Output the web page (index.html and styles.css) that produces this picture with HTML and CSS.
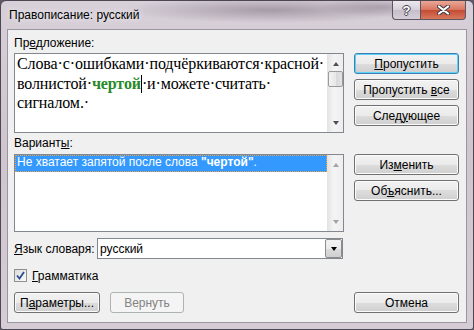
FILE: index.html
```html
<!DOCTYPE html>
<html lang="ru">
<head>
  <meta charset="UTF-8" />
  <title>Правописание: русский</title>
  <link rel="stylesheet" href="styles.css">
</head>
<body>

  <div class="window">

    <!-- Title bar -->
    <div class="titlebar">
      <span class="title">Правописание: русский</span>
      <div class="caption">
        <span class="cap-btn help">?</span>
        <span class="cap-btn close">
          <svg width="13" height="10" viewBox="0 0 13 10">
            <path d="M2 1.5 L11 8.5 M11 1.5 L2 8.5" stroke="#3b3b45" stroke-width="4" stroke-linecap="round"/>
            <path d="M2 1.5 L11 8.5 M11 1.5 L2 8.5" stroke="#fff" stroke-width="2.2" stroke-linecap="round"/>
          </svg>
        </span>
      </div>
    </div>

    <div class="panel">

      <!-- Sentence -->
      <div class="label">Пр<u>е</u>дложение:</div>
      <div class="row">
        <div class="box sentence">
          <div class="sentence-text">Слова·с·ошибками·подчёркиваются·красной·<br>волнистой·<b class="err">чертой</b><span class="caret"></span>·и·можете·считать·<br>сигналом.·</div>
          <div class="vscroll">
            <span class="arrow up"></span>
            <span class="thumb"></span>
            <span class="arrow down"></span>
          </div>
        </div>
        <div class="side">
          <button class="btn default"><u>П</u>ропустить</button>
          <button class="btn">Пропустить <u>в</u>се</button>
          <button class="btn">След<u>у</u>ющее</button>
        </div>
      </div>

      <!-- Suggestions -->
      <div class="label label-2">Вариант<u>ы</u>:</div>
      <div class="row">
        <div class="box list">
          <div class="list-items">
            <div class="item selected">Не хватает запятой после слова <b>"чертой"</b>.</div>
          </div>
          <div class="vscroll disabled">
            <span class="arrow up"></span>
            <span class="arrow down"></span>
          </div>
        </div>
        <div class="side">
          <button class="btn">Из<u>м</u>енить</button>
          <button class="btn">Об<u>ъ</u>яснить...</button>
        </div>
      </div>

      <!-- Dictionary language -->
      <div class="lang-row">
        <span class="lang-label"><u>Я</u>зык словаря:</span>
        <div class="combo">
          <span class="combo-value">русский</span>
          <span class="combo-btn"><span class="arrow down dark"></span></span>
        </div>
      </div>

      <label class="check-row">
        <span class="checkbox">
          <svg width="9" height="9" viewBox="0 0 9 9">
            <path d="M1 4.5 L3.5 7.5 L8 1" fill="none" stroke="#2b4d8f" stroke-width="1.8"/>
          </svg>
        </span>
        <span><u>Г</u>рамматика</span>
      </label>

      <div class="bottom-row">
        <button class="btn params">П<u>а</u>раметры...</button>
        <button class="btn undo" disabled>Вернуть</button>
        <button class="btn cancel">Отмена</button>
      </div>

    </div>
  </div>

</body>
</html>
```

FILE: styles.css
```css
body {
  margin: 0;
  background: #5f5866;
  font-family: "Liberation Sans", Arial, sans-serif;
  font-size: 12px;
  color: #000;
}
u {
  text-decoration: underline;
  text-underline-offset: 1px;
}

/* Window frame */
.window {
  width: 474px;
  height: 330px;
  box-sizing: border-box;
  border: 1px solid #4c4752;
  border-radius: 6px 6px 3px 3px;
  background:
    radial-gradient(ellipse 150px 13px at 270px 9px, rgba(70, 58, 76, 0.35), transparent),
    radial-gradient(ellipse 60px 10px at 380px 6px, rgba(70, 58, 76, 0.25), transparent),
    linear-gradient(180deg, #d8d0d9 0%, #cec5cf 45%, #d5ccd6 100%);
  display: flex;
  flex-direction: column;
  overflow: hidden;
}
.titlebar {
  height: 28px;
  display: flex;
  align-items: flex-start;
  padding: 0 7px 0 8px;
}
.title {
  margin-top: 7px;
  line-height: 15px;
  text-shadow: 0 0 6px rgba(255, 255, 255, 0.9);
}
.caption {
  margin-left: auto;
  display: flex;
}
.cap-btn {
  height: 19px;
  box-sizing: border-box;
  border: 1px solid #5b5661;
  border-top: none;
  display: flex;
  align-items: center;
  justify-content: center;
}
.help {
  width: 28px;
  border-right: none;
  border-radius: 0 0 0 4px;
  background: linear-gradient(180deg, #ece8ee 0%, #d6cfd9 50%, #c5bdc9 50%, #d6cfd9 100%);
  color: #fff;
  font-weight: bold;
  font-size: 13px;
  text-shadow: 1px 0 #44404a, -1px 0 #44404a, 0 1px #44404a, 0 -1px #44404a;
}
.close {
  width: 46px;
  border-radius: 0 0 4px 0;
  background: linear-gradient(180deg, #eaa897 0%, #d9745d 50%, #c44b33 50%, #d8785c 100%);
}

/* Client area */
.panel {
  flex: 1;
  margin: 0 6px 6px 6px;
  border: 1px solid #9a95a0;
  background: #f0f0f0;
  padding: 6px 7px 8px 6px;
  display: flex;
  flex-direction: column;
}
.label {
  line-height: 15px;
  margin-bottom: 2px;
}
.label-2 {
  margin-top: 3px;
  margin-bottom: 3px;
}
.row {
  display: flex;
  justify-content: space-between;
}
.box {
  width: 330px;
  box-sizing: border-box;
  border: 1px solid #828790;
  background: #fff;
  display: flex;
}
.sentence {
  height: 80px;
}
.list {
  height: 78px;
}
.sentence-text {
  flex: 1;
  padding: 0 0 0 2px;
  font-family: "Liberation Serif", "Times New Roman", serif;
  font-size: 16px;
  letter-spacing: -0.12px;
  line-height: 19.5px;
  white-space: nowrap;
  overflow: hidden;
}
.err {
  color: #288a28;
}
.caret {
  display: inline-block;
  width: 0;
  height: 18px;
  border-left: 1px solid #000;
  vertical-align: -4px;
}

/* Scrollbars */
.vscroll {
  width: 16px;
  background: linear-gradient(90deg, #e6e6e6, #f4f4f4 40%, #ededed);
  border-left: 1px solid #e4e4e4;
  display: flex;
  flex-direction: column;
  align-items: center;
  padding: 8px 0 7px;
  box-sizing: border-box;
}
.arrow {
  width: 0;
  height: 0;
  border-left: 3.5px solid transparent;
  border-right: 3.5px solid transparent;
}
.arrow.up {
  border-bottom: 4px solid #4e4e58;
}
.arrow.down {
  border-top: 4px solid #4e4e58;
  margin-top: auto;
}
.vscroll.disabled .arrow.up {
  border-bottom-color: #a3a3a3;
}
.vscroll.disabled .arrow.down {
  border-top-color: #a3a3a3;
}
.thumb {
  width: 15px;
  height: 16px;
  margin-top: 5px;
  box-sizing: border-box;
  border: 1px solid #9a9a9a;
  border-radius: 2px;
  background: linear-gradient(90deg, #f3f3f3, #e8e8e8 50%, #d9d9d9 50%, #e2e2e2);
}

.list-items {
  flex: 1;
}
.item {
  height: 15px;
  line-height: 13px;
  padding-left: 1px;
}
.item.selected {
  background: #3399ff;
  color: #fff;
  border: 1px dotted #f0a040;
}

/* Buttons */
.side {
  width: 105px;
  display: flex;
  flex-direction: column;
  gap: 5px;
}
.btn {
  height: 21px;
  width: 105px;
  box-sizing: border-box;
  border: 1px solid #707070;
  border-radius: 3px;
  background: linear-gradient(180deg, #f2f2f2 0%, #ebebeb 50%, #dddddd 50%, #cfcfcf 100%);
  box-shadow: inset 0 0 0 1px #fbfbfb;
  font-family: "Liberation Sans", Arial, sans-serif;
  font-size: 12px;
  color: #000;
  padding: 0;
}
.btn.default {
  border-color: #3c7fb1;
  box-shadow: inset 0 0 0 1px #5ed0f7;
}
.btn:disabled {
  border-color: #adb2b5;
  background: #f4f4f4;
  box-shadow: none;
  color: #838383;
}

/* Language row */
.lang-row {
  display: flex;
  align-items: center;
  margin-top: 6px;
}
.lang-label {
  width: 83px;
}
.combo {
  width: 246px;
  height: 21px;
  box-sizing: border-box;
  border: 1px solid #828790;
  background: #fff;
  display: flex;
  align-items: center;
}
.combo-value {
  padding-left: 2px;
}
.combo-btn {
  margin-left: auto;
  width: 17px;
  height: 19px;
  box-sizing: border-box;
  border: 1px solid #8d8d8d;
  border-radius: 2px;
  background: linear-gradient(180deg, #f2f2f2 0%, #ebebeb 50%, #dddddd 50%, #cfcfcf 100%);
  display: flex;
  align-items: center;
  justify-content: center;
}
.arrow.down.dark {
  margin-top: 0;
  border-top-color: #000;
}

/* Checkbox */
.check-row {
  display: flex;
  align-items: center;
  gap: 5px;
  margin-top: 10px;
  height: 13px;
}
.checkbox {
  width: 13px;
  height: 13px;
  box-sizing: border-box;
  border: 1px solid #8e8f8f;
  background: linear-gradient(135deg, #dcdcdc, #fbfbfb);
  display: flex;
  align-items: center;
  justify-content: center;
}

.bottom-row {
  display: flex;
  margin-top: 10px;
}
.params {
  width: 86px;
}
.undo {
  width: 74px;
  margin-left: 10px;
}
.cancel {
  margin-left: auto;
}
```
